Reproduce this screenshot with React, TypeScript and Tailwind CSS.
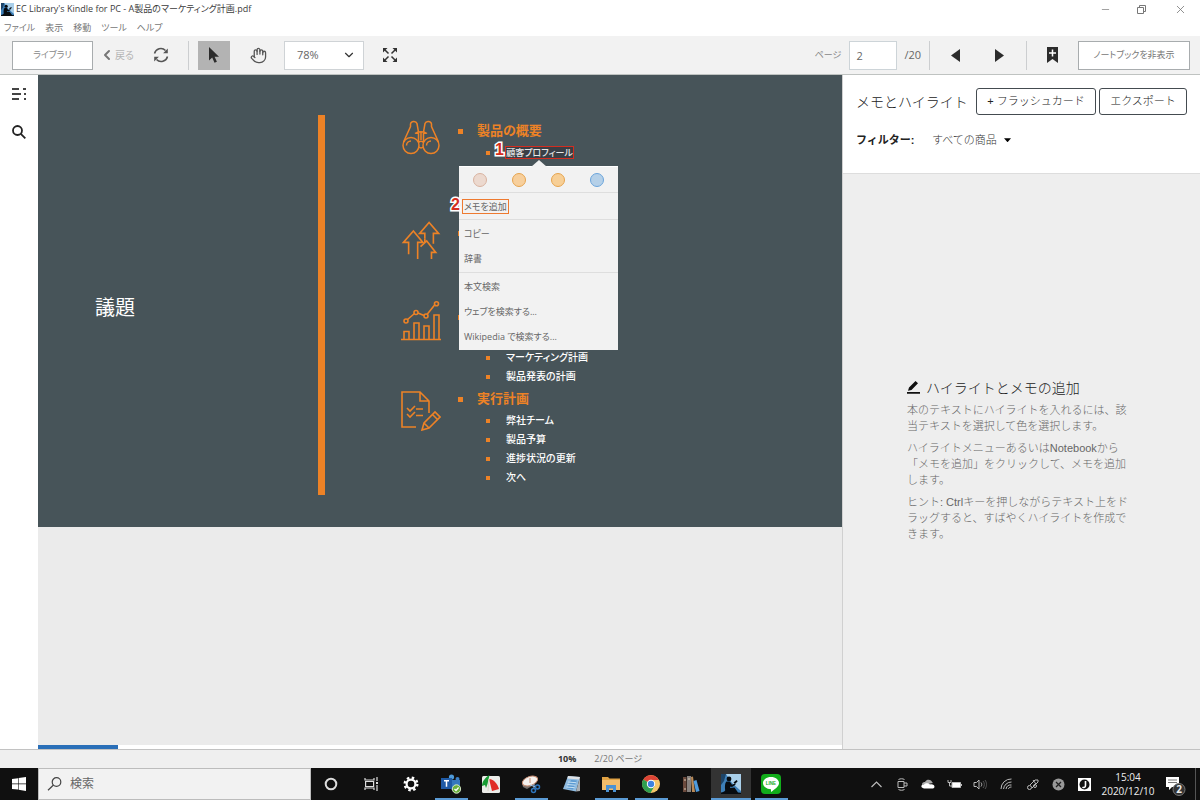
import React from 'react';
import { ChevronDown, ChevronLeft, Hand, Minus, X } from 'lucide-react';
import clsx from 'clsx';

type IconProps = { className?: string };

const Svg: React.FC<React.SVGProps<SVGSVGElement>> = ({ children, ...props }) => (
	<svg fill="none" stroke="currentColor" aria-hidden="true" {...props}>
		{children}
	</svg>
);

const KindleIcon: React.FC<IconProps> = ({ className }) => (
	<Svg viewBox="0 0 20 20" stroke="none" className={className}>
		<rect width="20" height="20" fill="#3d7fb8" />
		<path d="M5 0h15v17L11 9z" fill="#a9cfea" />
		<path d="M0 0h5L3 7l-3 4z" fill="#1d4468" />
		<circle cx="8" cy="5" r="2.400" fill="#070b10" />
		<path d="M5.500 7.500l3.500.3 2 3 3-1.300.6 1.200-3.600 2.300-1.500-.6-.5 1.600 4.500-.5 3.500 5 3 .3V20H0v-1.400c2-.2 3.500-1 4.200-2.300C3.800 13 3.800 9 5.500 7.500z" fill="#070b10" />
		<path d="M12.500 8.500l3-2.500 1.200 1.300-2.700 2.700z" fill="#070b10" />
	</Svg>
);

const TitleBar: React.FC = () => (
	<header className="flex h-[18px] items-center bg-white text-[9px] text-[#3c3c3c]">
		<KindleIcon className="ml-px h-[13px] w-[13px]" />
		<h1 className="ml-0.5 flex-1">EC Library's Kindle for PC - A製品のマーケティング計画.pdf</h1>
		<div className="flex gap-[25px] pr-3.5 text-[#777]">
			<button aria-label="最小化" className="w-3"><Minus size={11} strokeWidth={1.5} /></button>
			<button aria-label="元に戻す" className="flex w-3 items-center">
				<Svg width="9" height="9" viewBox="0 0 9 9">
					<path d="M.5 2.500h6v6h-6zM2.500 2.500v-2h6v6h-2" />
				</Svg>
			</button>
			<button aria-label="閉じる" className="w-3"><X size={13} strokeWidth={1.5} /></button>
		</div>
	</header>
);

const MenuBar: React.FC = () => (
	<nav className="flex h-[18px] items-center gap-2.5 bg-white pt-0.5 pl-1 text-[9px] text-[#777]">
		{['ファイル', '表示', '移動', 'ツール', 'ヘルプ'].map((label) => (
			<button key={label}>{label}</button>
		))}
	</nav>
);

const Divider: React.FC<IconProps> = ({ className }) => <span className={clsx('h-[29px] w-px bg-[#ccced0]', className)} />;

const Toolbar: React.FC = () => (
	<div className="flex h-[39px] items-center border-b border-[#bfc3c1] bg-[#f2f2f2] px-3 text-[11px] text-[#666]">
		<button className="h-[29px] w-[81px] border border-[#a8acae] bg-white text-[9px] text-[#888]">ライブラリ</button>
		<button className="ml-1.5 flex items-center text-[10px] text-[#b5b5b5]">
			<ChevronLeft size={16} strokeWidth={3} className="text-[#777]" />
			戻る
		</button>
		<button aria-label="更新" className="ml-[18px]">
			<Svg width="18" height="18" viewBox="0 0 18 18" stroke="#555" strokeWidth="1.500">
				<path d="M2.500 7.500A6.500 6.500 0 0 1 13.500 4.500M15.500 10.500A6.500 6.500 0 0 1 4.500 13.500" />
				<path d="M15.800 2.500v4.700h-4.700zM2.200 15.500v-4.700h4.700z" fill="#555" stroke="none" />
			</Svg>
		</button>
		<Divider className="ml-[18px]" />
		<button aria-label="選択" className="ml-[9px] flex h-[29px] w-8 items-center justify-center bg-[#b3b3b3]">
			<Svg width="12" height="17" viewBox="0 0 12 17" stroke="none">
				<path d="M1 0v13.500l3.200-3 2.300 5.300 2.400-1-2.300-5.100H11z" fill="#2c2c2c" />
			</Svg>
		</button>
		<button aria-label="手のひら" className="ml-5 text-[#555]">
			<Hand size={17} strokeWidth={1.800} />
		</button>
		<div className="relative ml-[17px]">
			<select aria-label="倍率" className="h-[29px] w-20 appearance-none border border-[#cfd3d6] bg-white pl-3 text-[11px]">
				<option>78%</option>
			</select>
			<ChevronDown size={14} className="pointer-events-none absolute top-[7px] right-2 text-[#333]" />
		</div>
		<button aria-label="全画面" className="ml-[18px]">
			<Svg width="16" height="16" viewBox="0 0 16 16" stroke="#333" strokeWidth="1.500">
				<path d="M3 3l3.500 3.500M13 3L9.500 6.500M3 13l3.500-3.500M13 13L9.500 9.500" />
				<path d="M1 1h4.500L1 5.500zM15 1h-4.500L15 5.500zM1 15h4.500L1 10.500zM15 15h-4.500l4.500-4.500z" fill="#333" stroke="none" />
			</Svg>
		</button>
		<label htmlFor="page" className="ml-auto text-[9px] text-[#888]">ページ</label>
		<input id="page" defaultValue="2" className="ml-2 h-[29px] w-12 border border-[#cdd4d8] bg-white pl-1.5" />
		<span className="ml-[7px]">/20</span>
		<Divider className="ml-2" />
		<button aria-label="前のページ" className="ml-[21px]">
			<Svg width="9" height="13" viewBox="0 0 9 13" stroke="none"><path d="M9 0v13L0 6.500z" fill="#2c2c2c" /></Svg>
		</button>
		<button aria-label="次のページ" className="ml-[35px]">
			<Svg width="9" height="13" viewBox="0 0 9 13" stroke="none"><path d="M0 0v13l9-6.500z" fill="#2c2c2c" /></Svg>
		</button>
		<Divider className="ml-[22px]" />
		<button aria-label="ブックマーク" className="ml-5">
			<Svg width="11" height="16" viewBox="0 0 11 16" stroke="none">
				<path d="M0 0h11v16l-5.500-4L0 16z" fill="#2c2c2c" />
				<path d="M5.500 2.500v7M2 6h7" stroke="#fff" strokeWidth="1.500" />
			</Svg>
		</button>
		<button className="-mr-0.5 ml-5 h-[29px] w-28 border border-[#a8acae] bg-white text-[9px] text-[#777]">ノートブックを非表示</button>
	</div>
);

const SideRail: React.FC = () => (
	<aside className="flex w-[38px] flex-col items-center gap-6 bg-white pt-3">
		<button aria-label="目次">
			<Svg width="16" height="14" viewBox="0 0 16 14" stroke="#444" strokeWidth="2">
				<path d="M1 2h7M1 7h9M1 12h7M12 2h3M13 7h2M13 12h2" />
			</Svg>
		</button>
		<button aria-label="検索" className="text-[#222]">
			<Svg width="14" height="14" viewBox="0 0 14 14" strokeWidth="1.800">
				<circle cx="5.500" cy="5.500" r="4.500" /><path d="M8.800 8.800l4.500 4.500" />
			</Svg>
		</button>
	</aside>
);

const slideIcon = 'h-10 w-10 text-[#ed8226]';

const Binoculars = () => (
	<Svg viewBox="0 0 40 40" strokeWidth="1.500" className={slideIcon}>
		<circle cx="10" cy="26.500" r="8" /><circle cx="30" cy="26.500" r="8" />
		<path d="M5.500 26.500a4.500 4.500 0 0 1 4.500-4.500M25.500 26.500a4.500 4.500 0 0 1 4.500-4.500" />
		<path d="M2.500 23L9.500 7.500V5C10 2 15 1.500 16 4.500L17.500 13v10M37.500 23L30.500 7.500V5C30 2 25 1.500 24 4.500L22.500 13v10M14 14.500c3-2.500 9-2.500 12 0M20 13v8M17.500 23.500c1.500-1.500 3.500-1.500 5 0M17.800 28c1.500 1.200 3 1.200 4.400 0" />
	</Svg>
);

const Arrows = () => (
	<Svg viewBox="0 0 40 42" strokeWidth="1.700" className={slideIcon}>
		<path d="M7 35V22.500H1.500L12 10.500l10 12h-5.500V40M24 18v-5h-5.500L28.500 1.500 38.500 13H33v11" />
		<path d="M19.500 27l6.500-6 9.500 12H31v7M24 18v4" />
	</Svg>
);

const Chart = () => (
	<Svg viewBox="0 0 40 40" strokeWidth="1.600" className={clsx(slideIcon, '-mt-1')}>
		<path d="M0 38.500h40M3 38.500v-8h5v8M13 38.500V22h5v16.500M23 38.500V25h5v13.500M33 38.500V14h5v24.500M6.500 18.500l7-6M17 12l6 2.500M26 13.500l8-10" />
		<circle cx="5" cy="20" r="2" /><circle cx="15" cy="11.500" r="2" /><circle cx="25" cy="15" r="2" /><circle cx="35.500" cy="2.800" r="2" />
	</Svg>
);

const Plan = () => (
	<Svg viewBox="0 0 40 40" strokeWidth="1.600" className={clsx(slideIcon, 'mt-1')}>
		<path d="M15 36H1V1h18l9 9v12M19 1v9h9M6 17l3 3 5-5M15 18h7M6 23l3 3 5-5M15 24.500h7" />
		<path d="M21 39l2-7 11-11 5 5-11 11zM23 32l5 5M31.500 23.500l5 5" />
	</Svg>
);

const Item: React.FC<React.PropsWithChildren> = ({ children }) => (
	<li className="flex h-[19px] items-center pl-7 text-[10px] font-medium text-white">
		{children && <span className="mr-4 h-1 w-1 bg-[#ed8226]" />}
		{children}
	</li>
);

type TopicProps = React.PropsWithChildren<{ icon: React.ReactNode; title?: string; className: string }>;

const Topic: React.FC<TopicProps> = ({ icon, title, className, children }) => (
	<section className={clsx('flex', className)}>
		<div className="w-[57px]">{icon}</div>
		<div>
			<h3 className="flex h-6 items-center text-[13px] font-bold text-[#ed8226]">
				<span className="mr-3.5 h-[5px] w-[5px] bg-[#ed8226]" />
				{title}
			</h3>
			<ul>{children}</ul>
		</div>
	</section>
);

const Step: React.FC<React.PropsWithChildren<IconProps>> = ({ className, children }) => (
	<span className={clsx('absolute font-["Liberation_Sans"] text-base leading-4 font-bold text-[#d32d20] [paint-order:stroke] [-webkit-text-stroke:3px_white]', className)}>
		{children}
	</span>
);

const groups = [['コピー', '辞書'], ['本文検索', 'ウェブを検索する...', 'Wikipedia で検索する...']];
const swatches = ['bg-[#ecd9cf] border-[#d9b3a0]', 'bg-[#f7cf9c] border-[#e6a44e]', 'bg-[#f7cf96] border-[#e6a44e]', 'bg-[#b5d0e8] border-[#6ba5dc]'];

const ContextMenu: React.FC = () => (
	<div className="absolute top-5 -left-[46px] z-10 w-[159px] border-t border-white bg-[#f2f2f2] text-[9px] font-normal text-[#666]">
		<span className="absolute -top-[7px] left-[72px] h-[7px] w-4 bg-[#f2f2f2] [clip-path:polygon(50%_0,100%_100%,0_100%)]" />
		<div className="flex h-[26px] items-center justify-between border-b border-[#dedede] px-3.5">
			{swatches.map((swatch, i) => (
				<button key={i} aria-label={`ハイライト ${i + 1}`} className={clsx('h-3.5 w-3.5 rounded-full border', swatch)} />
			))}
		</div>
		<div className="relative flex h-[27px] items-center border-b border-[#dedede] pl-[3px]">
			<Step className="top-1 -left-2">2</Step>
			<button className="h-[15px] border border-[#ee7a30] px-px leading-[13px]">メモを追加</button>
		</div>
		{groups.map((group, i) => (
			<div key={i} className="border-b border-[#dedede] py-px last:border-0">
				{group.map((label) => (
					<button key={label} className="block h-[25px] w-full pl-[5px] text-left">{label}</button>
				))}
			</div>
		))}
	</div>
);

const Slide: React.FC = () => (
	<article className="flex h-[452px] bg-[#475459]">
		<h2 className="flex w-[280px] items-center pt-3.5 pl-[57px] text-xl text-white">議題</h2>
		<span className="mt-10 mb-8 w-[7px] bg-[#ed8226]" />
		<div className="ml-[76px] pt-11">
			<Topic icon={<Binoculars />} title="製品の概要" className="h-[102px]">
				<Item>
					<span className="relative -ml-px">
						<mark className="block h-[13px] w-[69px] border border-[#d32d20] bg-[#3a3f45] text-center text-[9px] leading-[11px] whitespace-nowrap text-[#e5e5e5]">顧客プロフィール</mark>
						<Step className="-top-1 -left-2.5">1</Step>
						<ContextMenu />
					</span>
				</Item>
			</Topic>
			<Topic icon={<Arrows />} className="h-[84px]" />
			<Topic icon={<Chart />} className="h-[82px]">
				<Item />
				<Item>マーケティング計画</Item>
				<Item>製品発表の計画</Item>
			</Topic>
			<Topic icon={<Plan />} title="実行計画" className="h-[100px]">
				<Item>弊社チーム</Item>
				<Item>製品予算</Item>
				<Item>進捗状況の更新</Item>
				<Item>次へ</Item>
			</Topic>
		</div>
	</article>
);

const hints = [
	['本のテキストにハイライトを入れるには、該', '当テキストを選択して色を選択します。'],
	['ハイライトメニューあるいはNotebookから', '「メモを追加」をクリックして、メモを追加', 'します。'],
	['ヒント: Ctrlキーを押しながらテキスト上をド', 'ラッグすると、すばやくハイライトを作成で', 'きます。'],
];

const Notebook: React.FC = () => (
	<aside className='flex w-[358px] flex-col border-l border-[#d0d0d0] bg-[#eee] font-["Liberation_Sans","Noto_Sans_CJK_JP",sans-serif] text-[11px] font-light [font-feature-settings:normal]'>
		<div className="h-[99px] border-b border-[#ddd] bg-white pt-[13px] pl-[13px]">
			<div className="flex items-center">
				<h2 className="w-[120px] text-sm whitespace-nowrap text-[#222]">メモとハイライト</h2>
				<button className="h-[27px] w-[120px] rounded-[3px] border border-[#444b50] text-[#222]">+ フラッシュカード</button>
				<button className="ml-[3px] h-[27px] w-[88px] rounded-[3px] border border-[#444b50] text-[#222]">エクスポート</button>
			</div>
			<div className="mt-[17px] flex items-center">
				<label htmlFor="filter" className="w-[76px] font-bold text-[#222]">フィルター:</label>
				<select id="filter" className="w-[68px] appearance-none text-[#333]">
					<option>すべての商品</option>
				</select>
				<span className="ml-1 h-1 w-[7px] bg-black [clip-path:polygon(0_0,100%_0,50%_100%)]" />
			</div>
		</div>
		<div className="flex flex-1 flex-col justify-center gap-1.5 pr-10 pb-0.5 pl-16 leading-4 text-[#666]">
			<h3 className="flex h-4 items-center text-sm whitespace-nowrap text-[#222]">
				<Svg width="13" height="13" viewBox="0 0 13 13" stroke="none" className="mr-1.5">
					<path d="M0 11h13v1.800H0zM1 9.800L2 6.500 8.500 0 11 2.300 4.500 9z" fill="#111" />
				</Svg>
				ハイライトとメモの追加
			</h3>
			{hints.map((lines) => (
				<p key={lines[0]}>
					{lines.map((line) => (
						<span key={line} className="block whitespace-nowrap">{line}</span>
					))}
				</p>
			))}
		</div>
	</aside>
);

const Cortana = () => <Svg width="14" height="14" viewBox="0 0 14 14"><circle cx="7" cy="7" r="5.300" strokeWidth="2" /></Svg>;

const TaskView = () => (
	<Svg width="15" height="14" viewBox="0 0 15 14" strokeWidth="1.200">
		<path d="M1 1v2h9V1M1 13v-2h9v2M1.600 4.500h8v5h-8zM13 0v4M13 8v6" /><path d="M13 5v2" strokeWidth="2" />
	</Svg>
);

const Gear = () => (
	<Svg width="16" height="16" viewBox="0 0 16 16" stroke="#fff">
		<circle cx="8" cy="8" r="4.400" strokeWidth="2.200" />
		<circle cx="8" cy="8" r="6.300" strokeWidth="2.400" strokeDasharray="2.474 2.474" />
	</Svg>
);

const Teams = () => (
	<Svg width="20" height="20" viewBox="0 0 20 20" stroke="none">
		<circle cx="10.500" cy="3" r="2.600" fill="#4f9bd9" /><circle cx="16.500" cy="5" r="2" fill="#3b7fc4" />
		<path d="M8 6h11v6a4 4 0 0 1-4 4h-3a5 5 0 0 1-4-4z" fill="#3577bd" />
		<rect y="4" width="11" height="11" fill="#1f5aa5" /><path d="M3 6.800h5M5.500 6.800v6" stroke="#fff" strokeWidth="1.500" />
		<circle cx="15.500" cy="15" r="4.200" fill="#6bb03c" stroke="#d8eac8" /><path d="M13.500 15l1.500 1.500 2.600-3" stroke="#fff" strokeWidth="1.200" />
	</Svg>
);

const Shapes = () => (
	<Svg width="18" height="18" viewBox="0 0 18 18" stroke="none">
		<rect y="1" width="18" height="17" rx="1.500" fill="#ecece9" />
		<path d="M7.500 0C4 2 0 6 0 11l3-1 1 3 1.500-4z" fill="#179b33" />
		<path d="M7 4c5 0 9 6 10 10l-7 2z" fill="#e02d25" />
		<path d="M7 4l-1 12" stroke="#d9d5c8" />
	</Svg>
);

const Snip = () => (
	<Svg width="20" height="19" viewBox="0 0 20 19">
		<path d="M2 12L1 8l14-4-4 7-5 3z" fill="#77706c" stroke="none" />
		<ellipse cx="9" cy="6" rx="8" ry="4.400" fill="#f5f1ee" stroke="#c98d72" transform="rotate(-20 9 6)" />
		<path d="M9 3v5" stroke="#c98d72" />
		<path d="M9 10l6 2M13 9v5" stroke="#9fc3e6" /><circle cx="16.500" cy="12" r="2" stroke="#2d75bd" strokeWidth="1.500" /><circle cx="12.500" cy="15.500" r="2" stroke="#2d75bd" strokeWidth="1.500" />
	</Svg>
);

const Notepad = () => (
	<Svg width="18" height="18" viewBox="0 0 18 18" stroke="none">
		<path d="M6 1l12 1-4 14.500L1 14z" fill="#8fbbe0" /><path d="M6 1l12 1-.7 2.500-12-1z" fill="#dfe2e5" /><path d="M14 16.500L18 2v14z" fill="#a9adb1" />
		<path d="M9 5l6 .5-4 9-6-1z" fill="#5d9bd2" /><path d="M6 7l8 .7M5.300 9.500l8 .7M4.500 12l8 .7" stroke="#c8e2f4" />
	</Svg>
);

const Folder = () => (
	<Svg width="18" height="16" viewBox="0 0 18 16" stroke="none">
		<path d="M0 1h6l1.500 1.500H18V14H0z" fill="#e0a244" /><path d="M0 4h18v10H0z" fill="#f3bd6c" /><path d="M4 16V9h10v7h-3v-3.500H7V16z" fill="#4b92d4" />
	</Svg>
);

const Chrome = () => (
	<Svg width="18" height="18" viewBox="0 0 18 18" stroke="none">
		<circle cx="9" cy="9" r="9" fill="#f6c66a" /><path d="M9 9L1.200 4.500A9 9 0 0 1 16.800 5H9z" fill="#dd4436" />
		<path d="M1.200 4.500A9 9 0 0 0 8.500 18l4-7L9 9z" fill="#2f9e4f" /><circle cx="9" cy="9" r="4.200" fill="#fff" /><circle cx="9" cy="9" r="3.200" fill="#3f82e0" />
	</Svg>
);

const Books = () => (
	<Svg width="18" height="18" viewBox="0 0 18 18" stroke="none">
		<path d="M1 2h3.500v15H1z" fill="#6b4a3d" /><path d="M5 1h4v16H5z" fill="#86817e" /><path d="M9 2l2-.5 2 15.500h-3z" fill="#b98a58" /><path d="M11.500 6l3-1 3 11-3.500 1z" fill="#4f9bdc" />
		<path d="M2 5h2M2 14h2M6 4h2" stroke="#d8c9b2" />
	</Svg>
);

const Line = () => (
	<Svg width="20" height="20" viewBox="0 0 20 20" stroke="none">
		<rect width="20" height="20" rx="4" fill="#12ad1b" /><path d="M10 3c4.500 0 8 2.700 8 6 0 3.500-4 6-8 9v-2.700C5.500 15 2 12.500 2 9c0-3.300 3.500-6 8-6z" fill="#fff" />
		<text x="10" y="11" textAnchor="middle" fontSize="4.500" fontWeight="700" fontFamily="Liberation Sans" fill="#12ad1b">LINE</text>
	</Svg>
);

const apps = [
	{ name: 'Cortana', icon: <Cortana /> },
	{ name: 'タスク ビュー', icon: <TaskView /> },
	{ name: '設定', icon: <Gear /> },
	{ name: 'Teams', icon: <Teams />, open: true },
	{ name: '図形', icon: <Shapes /> },
	{ name: 'Snipping Tool', icon: <Snip />, open: true },
	{ name: 'メモ帳', icon: <Notepad /> },
	{ name: 'エクスプローラー', icon: <Folder />, open: true },
	{ name: 'Chrome', icon: <Chrome />, open: true },
	{ name: 'ライブラリ', icon: <Books /> },
	{ name: 'Kindle', icon: <KindleIcon className="h-5 w-5" />, open: true, active: true },
	{ name: 'LINE', icon: <Line />, open: true },
];

const tray = [
	<Svg width="11" height="7" viewBox="0 0 11 7" strokeWidth="1.200"><path d="M.5 6l5-5 5 5" /></Svg>,
	<Svg width="11" height="13" viewBox="0 0 11 13"><path d="M1 3.500h6v6H1zM7 5h3v3H7M1.500 1.500c2-1 4-1 6 0M1.500 11.500c2 1 4 1 6 0" /></Svg>,
	<Svg width="14" height="10" viewBox="0 0 14 10" stroke="none"><path d="M1 6C1 3 3 3 4 3c2-4 7-2 7 0l1 1z" fill="#aaa" /><path d="M3 9.500c-4-1-3-4 0-4 2-2 5-1 6 0 5-1 6 4 2 4z" fill="#fff" /></Svg>,
	<Svg width="15" height="11" viewBox="0 0 15 11"><path d="M5 3.500h8.500v5H5z" fill="#fff" /><path d="M1 1v2.500h3V1M2.500 4v3H5M14.500 5v2" /></Svg>,
	<Svg width="14" height="11" viewBox="0 0 14 11"><path d="M1 3.500h2.500L6 1v9L3.500 7.500H1zM8 3.500c1 1.200 1 2.800 0 4" /><path d="M10 2c1.800 2 1.800 5 0 7M12 1c2 2.700 2 6.300 0 9" stroke="#555" /></Svg>,
	<Svg width="13" height="12" viewBox="0 0 13 12"><path d="M1 11A10 10 0 0 1 11.500 1M3.500 11A8 8 0 0 1 11.500 4M6 11A5 5 0 0 1 11.500 7M8.500 11c0-1 1-2 3-2" /></Svg>,
	<Svg width="13" height="13" viewBox="0 0 13 13"><circle cx="3.500" cy="9.500" r="2" /><circle cx="9" cy="8" r="1.500" /><path d="M4 7L9 2h3v2L6 10M7 2l3 4" /></Svg>,
	<Svg width="13" height="13" viewBox="0 0 13 13"><circle cx="6.500" cy="6.500" r="6" fill="#999" stroke="none" /><path d="M4 4l5 5M9 4L4 9" stroke="#222" strokeWidth="1.300" /></Svg>,
	<Svg width="13" height="13" viewBox="0 0 13 13" stroke="none"><path d="M0 0h13v13H0z" fill="#fff" /><circle cx="6.500" cy="6.500" r="5" fill="#111" /><path d="M7.500 3v4.500c0 2-2 2.500-3 1.500" stroke="#fff" strokeWidth="1.600" /></Svg>,
];

const Taskbar: React.FC = () => (
	<footer className="flex h-8 bg-[#101010] text-[#ddd]">
		<button aria-label="スタート" className="flex w-[38px] items-center justify-center">
			<Svg width="14" height="14" viewBox="0 0 14 14" stroke="none">
				<path d="M0 2l6-.8v5.400H0zM6.600 1.100L14 0v6.600H6.600zM0 7.200h6v5.400L0 12zM6.600 7.200H14V14l-7.400-1.200z" fill="#fff" />
			</Svg>
		</button>
		<div className="flex w-[273px] items-center border border-[#bcbcbc] bg-[#f2f2f2] pl-2">
			<Svg width="15" height="14" viewBox="0 0 15 14" stroke="#444" strokeWidth="1.200">
				<circle cx="9.500" cy="5" r="4.300" /><path d="M6.500 8L1 13.300" />
			</Svg>
			<input type="search" aria-label="検索" placeholder="検索" className="ml-2 w-52 text-xs text-[#555] placeholder:text-[#666]" />
		</div>
		{apps.map((app) => (
			<button key={app.name} aria-label={app.name} className={clsx('flex w-10 flex-col items-center', app.active && 'bg-[#333]')}>
				<span className="flex flex-1 items-center pt-0.5">{app.icon}</span>
				<span className={clsx('h-0.5', app.active ? 'w-10' : 'w-[33px]', app.open && 'bg-[#5b9bd5]')} />
			</button>
		))}
		<div className="ml-auto flex">
			{tray.map((icon, i) => (
				<span key={i} className="flex w-[26px] items-center justify-center text-[#bbb]">{icon}</span>
			))}
		</div>
		<div className="w-[62px] pt-0.5 text-center text-[10px] leading-[14px] text-[#eee]">
			<div>15:04</div>
			<div>2020/12/10</div>
		</div>
		<button aria-label="通知" className="mr-2 ml-1.5 flex items-center pt-1">
			<Svg width="22" height="22" viewBox="0 0 22 22" stroke="none">
				<path d="M1 2h13v10H7l-3 3v-3H1z" fill="#fff" /><path d="M3 5h9M3 7.500h9" stroke="#777" />
				<circle cx="14" cy="14.500" r="6" fill="#333" stroke="#777" />
				<text x="14" y="18" textAnchor="middle" fontSize="10" fontWeight="700" fill="#eee">2</text>
			</Svg>
		</button>
		<span className="mr-1 w-px bg-[#555]" />
	</footer>
);

const App: React.FC = () => (
	<div className='flex min-h-screen flex-col bg-white font-["Open_Sans","Noto_Sans_CJK_JP",sans-serif] [font-feature-settings:"palt"]'>
		<TitleBar />
		<MenuBar />
		<Toolbar />
		<main className="flex flex-1">
			<SideRail />
			<div className="flex min-w-0 flex-1 flex-col bg-[#ebebeb]">
				<Slide />
				<div className="mt-auto h-1 bg-white">
					<div className="h-1 w-1/10 bg-[#2a6fb8]" />
				</div>
			</div>
			<Notebook />
		</main>
		<div className="flex h-[19px] items-center justify-center gap-[18px] border-t border-[#c2c2c2] bg-[#efefef] text-[9px] text-[#777]">
			<span className="font-bold text-[#333]">10%</span>
			<span>2/20 ページ</span>
		</div>
		<Taskbar />
	</div>
);

export default App;
